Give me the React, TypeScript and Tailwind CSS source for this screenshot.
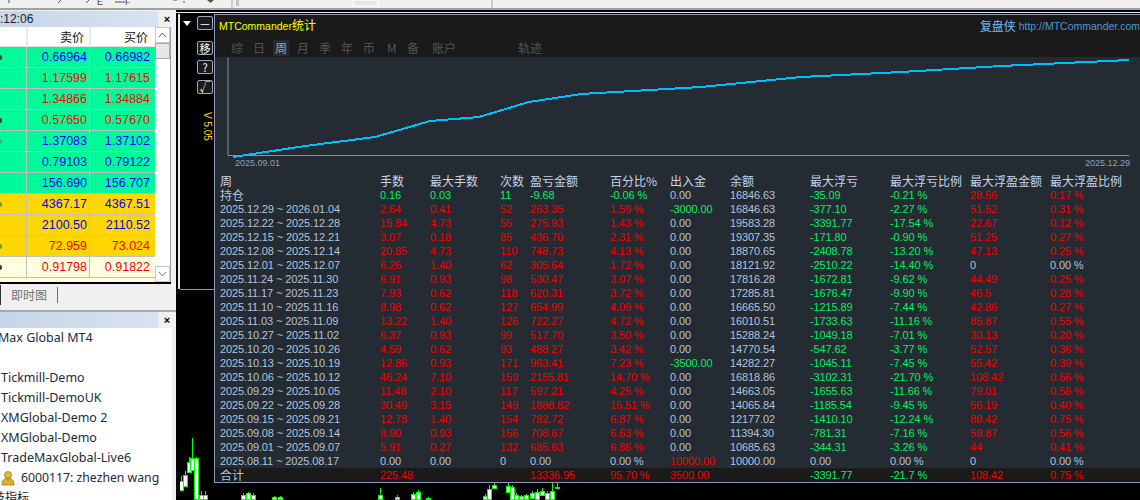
const quotes = [
  { sell: '0.66964', buy: '0.66982', bg: 'bg-[#00fa9a]', text: 'text-[#0000ff]', dot: 'bg-[#1f4f3a]' },
  { sell: '1.17599', buy: '1.17615', bg: 'bg-[#00fa9a]', text: 'text-[#ff0000]', dot: '' },
  { sell: '1.34866', buy: '1.34884', bg: 'bg-[#00fa9a]', text: 'text-[#ff0000]', dot: '' },
  { sell: '0.57650', buy: '0.57670', bg: 'bg-[#00fa9a]', text: 'text-[#ff0000]', dot: 'bg-[#1f4f3a]' },
  { sell: '1.37083', buy: '1.37102', bg: 'bg-[#00fa9a]', text: 'text-[#0000ff]', dot: 'bg-[#4fa0a0]' },
  { sell: '0.79103', buy: '0.79122', bg: 'bg-[#00fa9a]', text: 'text-[#0000ff]', dot: '' },
  { sell: '156.690', buy: '156.707', bg: 'bg-[#00fa9a]', text: 'text-[#0000ff]', dot: '' },
  { sell: '4367.17', buy: '4367.51', bg: 'bg-[#ffd700]', text: 'text-[#0000ff]', dot: 'bg-[#6a9a20]' },
  { sell: '2100.50', buy: '2110.52', bg: 'bg-[#ffd700]', text: 'text-[#0000ff]', dot: '' },
  { sell: '72.959', buy: '73.024', bg: 'bg-[#ffd700]', text: 'text-[#ff0000]', dot: 'bg-[#6a9a20]' },
  { sell: '0.91798', buy: '0.91822', bg: 'bg-[#ffffe0]', text: 'text-[#ff0000]', dot: 'bg-[#27404a]' },
];

const servers = ['Tickmill-Demo', 'Tickmill-DemoUK', 'XMGlobal-Demo 2', 'XMGlobal-Demo', 'TradeMaxGlobal-Live6'];

const tabs = [
  { label: '综', w: 'w-[22px]' },
  { label: '日', w: 'w-[22px]' },
  { label: '周', w: 'w-[22px]', active: true },
  { label: '月', w: 'w-[22px]' },
  { label: '季', w: 'w-[22px]' },
  { label: '年', w: 'w-[22px]' },
  { label: '币', w: 'w-[24px]' },
  { label: 'M', w: 'w-[20px]' },
  { label: '备', w: 'w-[25px]' },
  { label: '账户', w: 'w-[86px]' },
  { label: '轨迹', w: 'w-[30px]' },
];

const heads = ['周', '手数', '最大手数', '次数', '盈亏金额', '百分比%', '出入金', '余额', '最大浮亏', '最大浮亏比例', '最大浮盈金额', '最大浮盈比例'];

const rows = [
  ['持仓', '0.16', '0.03', '11', '-9.68', '-0.06 %', '0.00', '16846.63', '-35.09', '-0.21 %', '28.56', '0.17 %'],
  ['2025.12.29 ~ 2026.01.04', '2.64', '0.41', '52', '263.35', '1.59 %', '-3000.00', '16846.63', '-377.10', '-2.27 %', '51.52', '0.31 %'],
  ['2025.12.22 ~ 2025.12.28', '15.84', '4.73', '55', '275.93', '1.43 %', '0.00', '19583.28', '-3391.77', '-17.54 %', '22.67', '0.12 %'],
  ['2025.12.15 ~ 2025.12.21', '3.07', '0.18', '85', '436.70', '2.31 %', '0.00', '19307.35', '-171.80', '-0.90 %', '51.25', '0.27 %'],
  ['2025.12.08 ~ 2025.12.14', '20.85', '4.73', '110', '748.73', '4.13 %', '0.00', '18870.65', '-2408.78', '-13.20 %', '47.13', '0.25 %'],
  ['2025.12.01 ~ 2025.12.07', '6.26', '1.40', '62', '305.64', '1.72 %', '0.00', '18121.92', '-2510.22', '-14.40 %', '0', '0.00 %'],
  ['2025.11.24 ~ 2025.11.30', '6.91', '0.93', '98', '530.47', '3.07 %', '0.00', '17816.28', '-1672.81', '-9.62 %', '44.49', '0.25 %'],
  ['2025.11.17 ~ 2025.11.23', '7.93', '0.62', '118', '620.31', '3.72 %', '0.00', '17285.81', '-1676.47', '-9.90 %', '46.5', '0.28 %'],
  ['2025.11.10 ~ 2025.11.16', '8.98', '0.62', '127', '654.99', '4.09 %', '0.00', '16665.50', '-1215.89', '-7.44 %', '42.86', '0.27 %'],
  ['2025.11.03 ~ 2025.11.09', '13.22', '1.40', '126', '722.27', '4.72 %', '0.00', '16010.51', '-1733.63', '-11.16 %', '85.87', '0.55 %'],
  ['2025.10.27 ~ 2025.11.02', '6.37', '0.93', '99', '517.70', '3.50 %', '0.00', '15288.24', '-1049.18', '-7.01 %', '30.13', '0.20 %'],
  ['2025.10.20 ~ 2025.10.26', '4.59', '0.62', '93', '488.27', '3.42 %', '0.00', '14770.54', '-547.62', '-3.77 %', '52.57', '0.36 %'],
  ['2025.10.13 ~ 2025.10.19', '12.86', '0.93', '171', '963.41', '7.23 %', '-3500.00', '14282.27', '-1045.11', '-7.45 %', '55.42', '0.39 %'],
  ['2025.10.06 ~ 2025.10.12', '46.24', '7.10', '159', '2155.81', '14.70 %', '0.00', '16818.86', '-3102.31', '-21.70 %', '108.42', '0.66 %'],
  ['2025.09.29 ~ 2025.10.05', '11.48', '2.10', '117', '597.21', '4.25 %', '0.00', '14663.05', '-1655.63', '-11.66 %', '79.01', '0.56 %'],
  ['2025.09.22 ~ 2025.09.28', '30.49', '3.15', '149', '1888.82', '15.51 %', '0.00', '14065.84', '-1185.54', '-9.45 %', '56.19', '0.40 %'],
  ['2025.09.15 ~ 2025.09.21', '12.78', '1.40', '154', '782.72', '6.87 %', '0.00', '12177.02', '-1410.10', '-12.24 %', '88.42', '0.75 %'],
  ['2025.09.08 ~ 2025.09.14', '8.90', '0.93', '156', '708.67', '6.63 %', '0.00', '11394.30', '-781.31', '-7.16 %', '59.87', '0.56 %'],
  ['2025.09.01 ~ 2025.09.07', '5.91', '0.27', '132', '685.63', '6.86 %', '0.00', '10685.63', '-344.31', '-3.26 %', '44', '0.41 %'],
  ['2025.08.11 ~ 2025.08.17', '0.00', '0.00', '0', '0.00', '0.00 %', '10000.00', '10000.00', '0.00', '0.00 %', '0', '0.00 %'],
];

const totals = ['合计', '225.48', '', '', '13336.95', '95.70 %', '3500.00', '', '-3391.77', '-21.7 %', '108.42', '0.75 %'];

const gridCols = 'grid grid-cols-[160px_50px_70px_30px_80px_60px_60px_80px_80px_80px_80px_1fr]';

// red = profit, green = loss, steel blue = nothing
const cellColor = (value: string, col: number, isOpen: boolean) => {
  if (col === 0 || col === 7) return 'text-[#b0c4de]';
  if (isOpen && col < 4) return 'text-[#00ee66]';
  if (value.startsWith('-')) return 'text-[#00ee66]';
  if (parseFloat(value) === 0) return 'text-[#b0c4de]';
  return 'text-[#f00000]';
};

const Cell = ({ value, className }: { value: string; className: string }) => (
  <div className={`h-[14px] overflow-hidden whitespace-pre text-[11px] tracking-[-0.12px] ${className}`}>{value}</div>
);

const Toolbar = () => (
  <div className="h-[10px] shrink-0 bg-[#f0f0f0] border-b-2 border-[#a0a0a0] overflow-hidden">
    <svg width="1140" height="8" className="block">
      <g stroke="#555" strokeWidth="1" fill="none">
        <path d="M9 0v3M58 3l3-3M86 3l3-3M115 2h10M173 0h4M183 2h2" />
      </g>
      <text x="97" y="5" fontSize="9" fill="#444" fontFamily="Liberation Sans">E</text>
      <text x="125" y="5" fontSize="9" fill="#444" fontFamily="Liberation Sans">F</text>
      <path d="M207 0h7l-3.500 3z" fill="#555" />
      <path d="M232 0v8M492 0v8" stroke="#a8a8a8" />
      <path d="M236 1h3M236 3h3M236 5h3" stroke="#999" />
      <rect x="353" y="0" width="25" height="6" fill="#e8e8e8" stroke="#fff" />
    </svg>
  </div>
);

const PanelTitle = ({ text }: { text: string }) => (
  <div className="flex h-[16px] shrink-0 items-center">
    <div className="flex h-full w-[158px] items-center bg-gradient-to-r from-[#c6d5e8] to-[#d7e3f0] text-[12px] leading-none text-[#222]">
      {text}
    </div>
    <div className="flex flex-1 justify-center text-[11px] font-bold leading-none text-black">×</div>
  </div>
);

const MarketWatch = () => (
  <div className="flex h-[272px] shrink-0 flex-col overflow-hidden">
    <div className="h-px shrink-0" />
    <PanelTitle text=":12:06" />
    <div className="flex w-[171px] flex-1 min-h-0 border-r border-[#a0a0a0]">
      <div className="flex w-[155px] shrink-0 flex-col overflow-hidden bg-white">
        <div className="flex h-[20px] shrink-0 border-b border-[#e0e0e0] text-[12px] leading-[19px] text-[#111]">
          <div className="w-[28px] border-r-2 border-[#e8e8e8]" />
          <div className="w-[63px] border-r-2 border-[#e8e8e8] pr-[5px] text-right font-['Noto_Sans_CJK_SC',sans-serif]">卖价</div>
          <div className="w-[64px] pr-[7px] text-right font-['Noto_Sans_CJK_SC',sans-serif]">买价</div>
        </div>
        {quotes.map((q) => (
          <div key={q.sell} className={`flex h-[21px] shrink-0 border-b border-[#c0c0c0] ${q.bg} ${q.text} text-[12.500px] leading-[20px]`}>
            <div className="flex w-[27px] shrink-0 items-center border-r border-[#c0c0c0]">
              {q.dot && <span className={`h-[5px] w-[2px] rounded-r-full ${q.dot}`} />}
            </div>
            <div className="w-[63px] shrink-0 border-r border-[#c0c0c0] pr-[2px] text-right">{q.sell}</div>
            <div className="w-[65px] shrink-0 pr-[5px] text-right">{q.buy}</div>
          </div>
        ))}
        <div className="flex-1 bg-[#ffffe0]" />
      </div>
      <div className="flex flex-1 flex-col bg-white">
        <div className="flex h-[16px] items-center justify-center border border-[#c8c8c8]">
          <svg width="9" height="6" viewBox="0 0 9 6"><path d="M1 5l3.500-4L8 5" fill="none" stroke="#555" /></svg>
        </div>
        <div className="h-[16px] border border-[#a8a8a8] bg-[#e6e6e6]" />
        <div className="flex-1" />
        <div className="flex h-[16px] items-center justify-center border border-[#c8c8c8]">
          <svg width="9" height="6" viewBox="0 0 9 6"><path d="M1 1l3.500 4L8 1" fill="none" stroke="#777" /></svg>
        </div>
      </div>
    </div>
  </div>
);

const Navigator = () => (
  <div className="flex flex-1 min-h-0 flex-col">
    <PanelTitle text="" />
    <div className="flex-1 w-[172px] overflow-hidden bg-white text-[12.500px] text-[#1c2a3c] font-['Noto_Sans',sans-serif]">
      <div className="h-[20px] -ml-[2px] whitespace-nowrap leading-[20px]">Max Global MT4</div>
      <div className="h-[20px] -ml-[6px] text-[9px] leading-[14px]">n</div>
      {servers.map((s) => (
        <div key={s} className="h-[20px] pl-[1px] whitespace-nowrap leading-[20px]">{s}</div>
      ))}
      <div className="flex h-[20px] items-center gap-[6px] pl-[1px] whitespace-nowrap">
        <svg width="14" height="15" viewBox="0 0 14 15" className="shrink-0">
          <circle cx="7" cy="4" r="3.500" fill="#e6b92e" stroke="#8d7420" strokeWidth=".7" />
          <path d="M1 14c0-5 2-6.500 6-6.500s6 1.500 6 6.500z" fill="#dcae28" stroke="#8d7420" strokeWidth=".7" />
        </svg>
        <span className="text-[12.250px]">6000117: zhezhen wang</span>
      </div>
      <div className="-ml-[8px] pl-[1px] text-[12px] leading-[17px] text-[#222] font-['Noto_Sans_CJK_SC',sans-serif]">技指标</div>
    </div>
  </div>
);

const LeftPanel = () => (
  <div className="flex h-full w-[176px] shrink-0 flex-col bg-[#f0f0f0]">
    <MarketWatch />
    <div className="h-[2px] w-[171px] shrink-0 bg-black" />
    <div className="flex h-[22px] w-[171px] shrink-0 items-center">
      <div className="h-[20px] w-px bg-[#333]" />
      <span className="ml-[10px] w-[46px] text-[12px] text-[#707070] font-['Noto_Sans_CJK_SC',sans-serif]">即时图</span>
      <div className="h-[16px] w-px bg-[#707070]" />
    </div>
    <div className="h-[6px] shrink-0 border-b-2 border-[#a8a8a8]" />
    <Navigator />
  </div>
);

const SideButton = ({ label, className }: { label: string; className: string }) => (
  <div className={`flex h-[14px] w-[16px] shrink-0 items-center justify-center rounded-[2px] border border-[#9aa8bc] bg-[#1a1a1a] text-[11px] leading-none text-white font-['Noto_Sans_CJK_SC',sans-serif] ${className}`}>
    {label}
  </div>
);

// x, wick top, body top, body bottom (white body)
const sideCandles = [
  [1, 41, 46, 56], [5, 36, 40, 52], [9, 22, 27, 38], [12, 3, 23, 36], [16, 22, 23, 65], [21, 56, 60, 65], [25, 56, 60, 65],
];

const stripCandles = [
  [29, 10, 12, 17], [34, 9, 10, 17], [39, 10, 12, 17], [60, 13, 14, 17], [66, 13, 14, 17], [166, 5, 12, 17], [183, 12, 14, 17],
  [199, 9, 11, 17], [204, 7, 9, 17], [214, 14, 15, 17], [271, 11, 13, 17], [275, 2, 6, 17], [280, 0, 2, 6], [294, 0, 3, 10],
  [298, 2, 4, 17], [302, 10, 12, 17], [307, 12, 13, 17], [312, 11, 12, 17], [318, 8, 10, 16], [323, 6, 9, 17], [328, 5, 8, 13],
  [333, 8, 10, 17], [338, 0, 8, 17], [343, 0, 4, 6],
];

const Candles = ({ data, w, h }: { data: number[][]; w: number; h: number }) => (
  <svg width={w} height={h} className="block shrink-0">
    {data.map(([x, top, bt, bb]) => (
      <g key={`${x}-${top}`}>
        <path d={`M${x + 0.5} ${top}V${bb}`} stroke="#00ff00" />
        <rect x={x - 1.5} y={bt + 0.5} width="4" height={Math.max(bb - bt - 1, 1)} fill="#fff" stroke="#00ff00" />
      </g>
    ))}
  </svg>
);

const Sidebar = () => (
  <div className="flex h-full w-[34px] shrink-0 flex-col overflow-hidden">
    <div className="flex h-[16px] shrink-0 items-center pl-[3px] pt-[2px]">
      <span className="h-0 w-0 border-x-[4px] border-t-[5px] border-x-transparent border-t-white" />
      <SideButton label="—" className="ml-[6px]" />
    </div>
    <SideButton label="移" className="ml-[17px] mt-[11px]" />
    <SideButton label="?" className="ml-[17px] mt-[5px]" />
    <SideButton label="√" className="ml-[17px] mt-[6px]" />
    <div className="ml-[21px] mt-[18px] h-[30px] w-[12px] shrink-0 whitespace-nowrap text-[10px] leading-[12px] text-[#ffd700] [writing-mode:vertical-rl]">V 5.05</div>
    <div className="mt-[147px] h-px w-full shrink-0 bg-[#8a9ab0]" />
    <div className="flex-1" />
    <Candles data={sideCandles} w={34} h={65} />
  </div>
);

const EquityChart = () => (
  <svg width="925" height="117" className="block shrink-0">
    <path d="M13 0.500V98.500H914" fill="none" stroke="#8a929c" />
    <path
      d="M18 100L90 89L160 80L215 64L264 60L314 45L366 37L486 30L586 20L686 15L786 9L914 3"
      fill="none"
      stroke="#00bfff"
      strokeWidth="2"
      shapeRendering="crispEdges"
    />
    <text x="20" y="109" fontSize="9" fill="#8fa0b4" fontFamily="Liberation Sans">2025.09.01</text>
    <text x="870" y="109" fontSize="9" fill="#8fa0b4" fontFamily="Liberation Sans">2025.12.29</text>
  </svg>
);

const StatsWindow = () => (
  <div className="flex h-[469px] shrink-0 flex-col overflow-hidden border-y border-l border-[#8a9ab8] bg-[#1a1a1a]">
    <div className="flex h-[25px] shrink-0 items-end justify-between pb-[6px] pl-[4px]">
      <span className="text-[10.500px] leading-[16px] text-[#ffff00]">
        MTCommander<span className="text-[12px] font-['Noto_Sans_CJK_SC',sans-serif]">统计</span>
      </span>
      <span className="flex items-end gap-[3px] leading-[16px]">
        <span className="text-[12px] tracking-[-0.1px] text-[#74bdf2] font-['Noto_Sans_CJK_SC',sans-serif]">复盘侠</span>
        <span className="text-[10.500px] text-[#4e97d0]">http://MTCommander.com</span>
      </span>
    </div>
    <div className="flex h-[17px] shrink-0 pl-[16px] text-[12px] leading-[16px] text-[#555] font-['Noto_Sans_CJK_SC',sans-serif]">
      {tabs.map((t) => (
        <div key={t.label} className={`${t.w} shrink-0`}>
          <span className={t.active ? 'inline-block rounded-[2px] bg-[#252b33] px-[2px] -ml-[2px] text-[#a0a0a0]' : ''}>{t.label}</span>
        </div>
      ))}
    </div>
    <div className="flex flex-1 min-h-0 flex-col bg-[#252b33]">
      <EquityChart />
      <div className={`${gridCols} h-[14px] shrink-0 pl-[5px] text-[12px] leading-[14px] text-[#c8d4e6] font-['Noto_Sans_CJK_SC',sans-serif]`}>
        {heads.map((h) => (
          <div key={h} className="h-[14px] overflow-hidden whitespace-nowrap">{h}</div>
        ))}
      </div>
      {rows.map((row, i) => (
        <div key={row[0]} className={`${gridCols} h-[14px] shrink-0 pl-[5px] leading-[14px]`}>
          {row.map((v, col) => (
            <Cell
              key={col}
              value={v}
              className={`${cellColor(v, col, i === 0)} ${i === 0 && col === 0 ? "text-[12px] font-['Noto_Sans_CJK_SC',sans-serif]" : ''}`}
            />
          ))}
        </div>
      ))}
      <div className={`${gridCols} h-[14px] shrink-0 bg-[#1a1a1a] pl-[5px] leading-[14px]`}>
        {totals.map((v, col) => (
          <Cell
            key={col}
            value={v}
            className={`${col === 0 ? "text-[12px] font-['Noto_Sans_CJK_SC',sans-serif]" : ''} ${v ? cellColor(v, col, false) : ''}`}
          />
        ))}
      </div>
    </div>
  </div>
);

export default function App() {
  return (
    <div className="flex h-[500px] w-[1140px] flex-col overflow-hidden bg-black font-['Liberation_Sans',sans-serif]">
      <Toolbar />
      <div className="flex flex-1 min-h-0">
        <LeftPanel />
        <div className="flex h-full flex-1 min-w-0 flex-col bg-black">
          {/* the thin double rule over the chart area */}
          <div className="h-[4px] shrink-0 pt-[2px]">
            <div className="h-px bg-[#e8e8e8]" />
          </div>
          <div className="flex flex-1 min-h-0 pl-[2px]">
            <div className="h-[275px] w-[2px] shrink-0 bg-[#e8e8e8]" />
            <Sidebar />
            <div className="flex min-w-0 flex-1 flex-col">
              <StatsWindow />
              <Candles data={stripCandles} w={926} h={17} />
            </div>
          </div>
        </div>
      </div>
    </div>
  );
}
